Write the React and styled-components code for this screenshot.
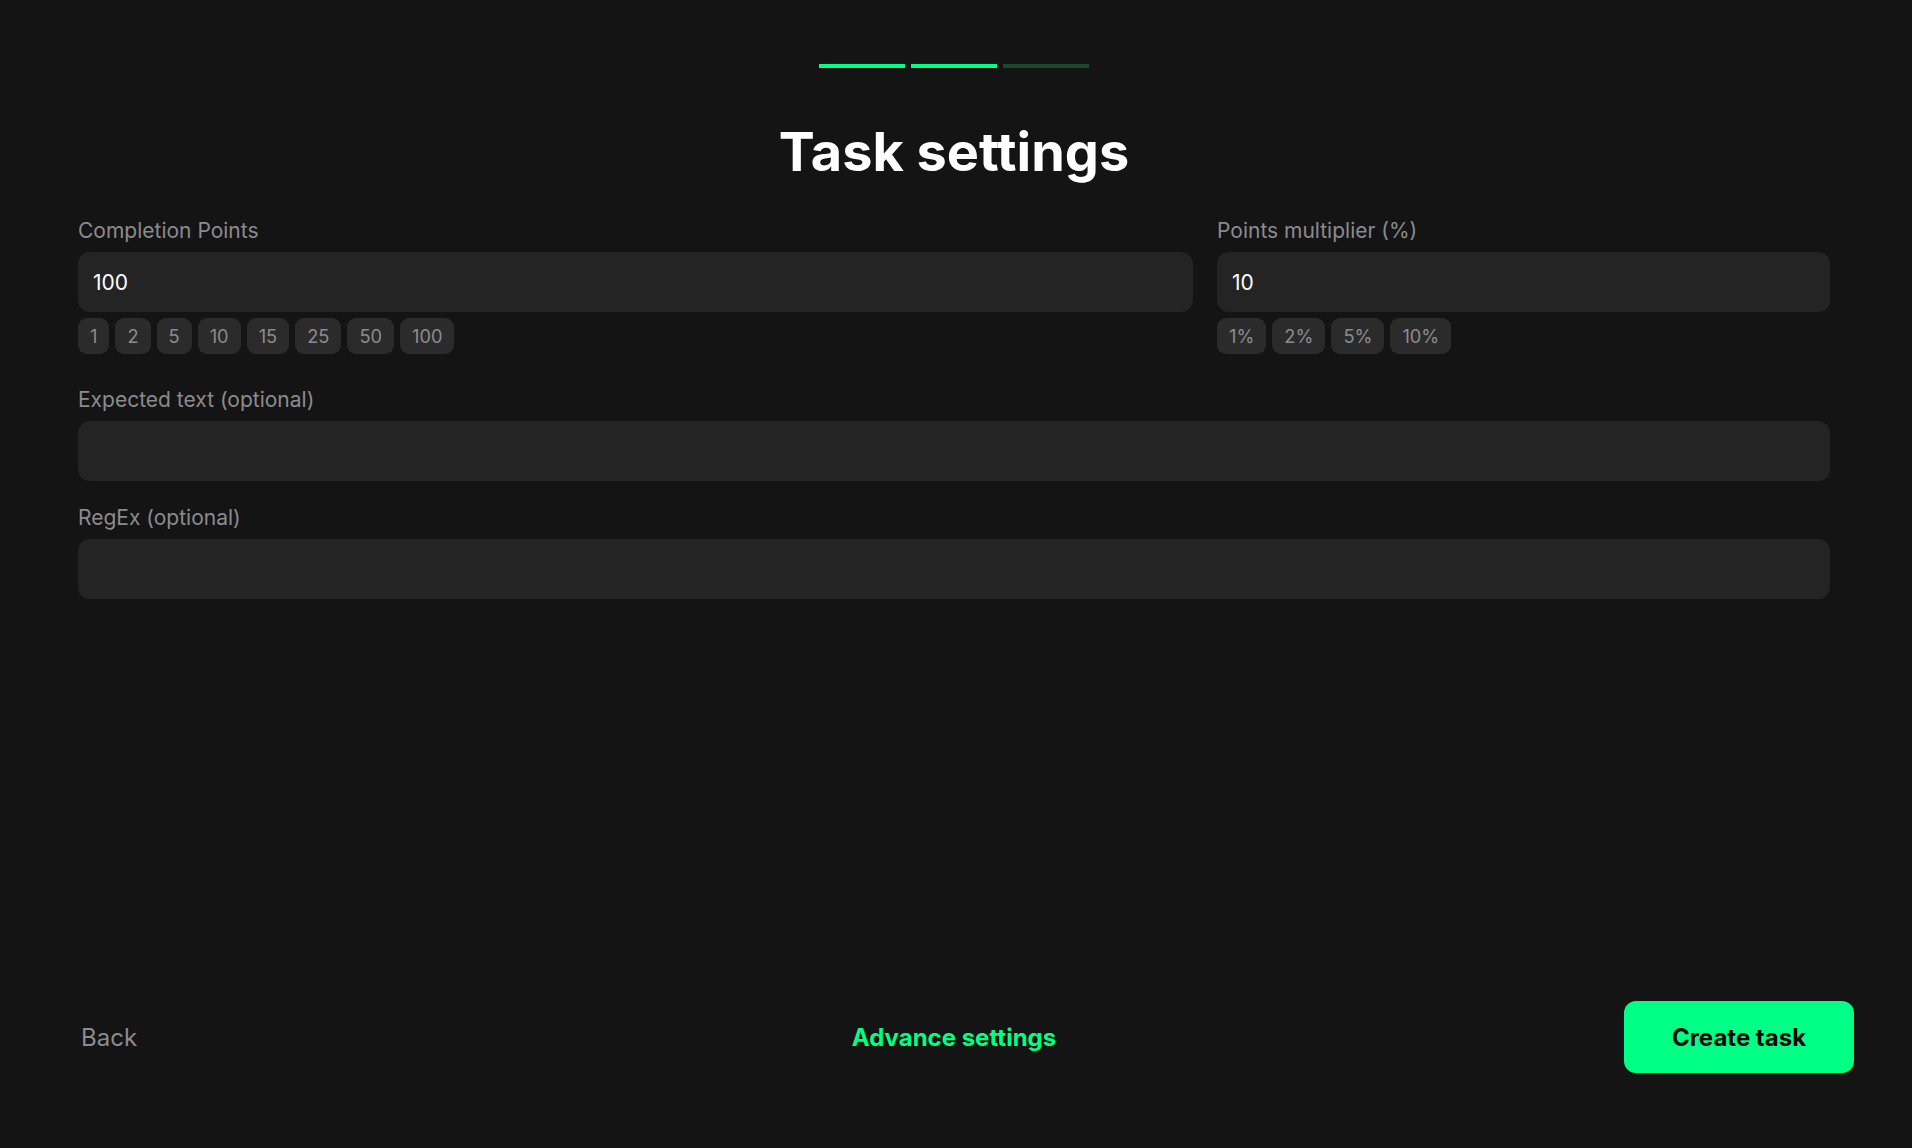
import React from 'react'
import styled, { createGlobalStyle } from 'styled-components'

const Global = createGlobalStyle`
  * { box-sizing: border-box; }
  html, body { margin: 0; padding: 0; background: #141414; }
  body { font-family: Inter, "Noto Sans", sans-serif; }
`

const Page = styled.div`
  width: 1908px;
  height: 1148px;
  display: flex;
  flex-direction: column;
  background: #141414;
`

const Steps = styled.div`
  display: flex;
  justify-content: center;
  gap: 6px;
  padding-top: 64px;
`

const Step = styled.div`
  width: 86px;
  height: 4px;
  background: ${p => (p.$done ? '#00ff85' : '#1b472b')};
`

const Title = styled.h1`
  margin: 50px 0 0;
  text-align: center;
  font-size: 54px;
  line-height: 68px;
  font-weight: 700;
  color: #fff;
`

const Form = styled.div`
  padding: 0 78px;
  margin-top: 30px;
  display: flex;
  flex-direction: column;
`

const TopRow = styled.div`
  display: grid;
  grid-template-columns: 1115fr 613fr;
  column-gap: 24px;
  margin-bottom: 31px;
`

const Field = styled.div`
  display: flex;
  flex-direction: column;
  margin-bottom: ${p => p.$mb || 0}px;
`

const Label = styled.label`
  font-size: 21px;
  line-height: 30px;
  color: #8b8b8f;
  margin-bottom: 6px;
`

const Input = styled.input`
  width: 100%;
  height: 60px;
  padding: 0 15px;
  border: none;
  outline: none;
  border-radius: 12px;
  background: #242424;
  color: #fff;
  font-family: inherit;
  font-size: 21px;
`

const Chips = styled.div`
  display: flex;
  gap: 6px;
  margin-top: 6px;
`

const Chip = styled.button`
  height: 36px;
  padding: 0 12px;
  border: none;
  border-radius: 9px;
  background: #2b2b2b;
  color: #8b8b8f;
  font-family: inherit;
  font-size: 18.25px;
`

const Footer = styled.div`
  margin-top: auto;
  padding: 0 54px 75px;
  display: grid;
  grid-template-columns: 1fr auto 1fr;
  align-items: center;
`

const TextButton = styled.button`
  border: none;
  background: none;
  padding: 0 27px;
  font-family: inherit;
  font-size: 24px;
  justify-self: ${p => p.$align || 'center'};
  font-weight: ${p => (p.$accent ? 700 : 400)};
  color: ${p => (p.$accent ? '#00ff85' : '#8b8b8f')};
`

const CreateButton = styled.button`
  justify-self: end;
  width: 230px;
  height: 72px;
  border: none;
  border-radius: 12px;
  background: #00ff85;
  color: #0a0a0a;
  font-family: inherit;
  font-size: 24px;
  font-weight: 700;
`

const points = ['1', '2', '5', '10', '15', '25', '50', '100']
const multipliers = ['1%', '2%', '5%', '10%']

export default function App() {
  return (
    <Page>
      <Global />
      <Steps>
        <Step $done />
        <Step $done />
        <Step />
      </Steps>
      <Title>Task settings</Title>
      <Form>
        <TopRow>
          <Field>
            <Label>Completion Points</Label>
            <Input defaultValue="100" />
            <Chips>
              {points.map(v => <Chip key={v}>{v}</Chip>)}
            </Chips>
          </Field>
          <Field>
            <Label>Points multiplier (%)</Label>
            <Input defaultValue="10" />
            <Chips>
              {multipliers.map(v => <Chip key={v}>{v}</Chip>)}
            </Chips>
          </Field>
        </TopRow>
        <Field $mb={22}>
          <Label>Expected text (optional)</Label>
          <Input />
        </Field>
        <Field>
          <Label>RegEx (optional)</Label>
          <Input />
        </Field>
      </Form>
      <Footer>
        <TextButton $align="start">Back</TextButton>
        <TextButton $accent>Advance settings</TextButton>
        <CreateButton>Create task</CreateButton>
      </Footer>
    </Page>
  )
}
